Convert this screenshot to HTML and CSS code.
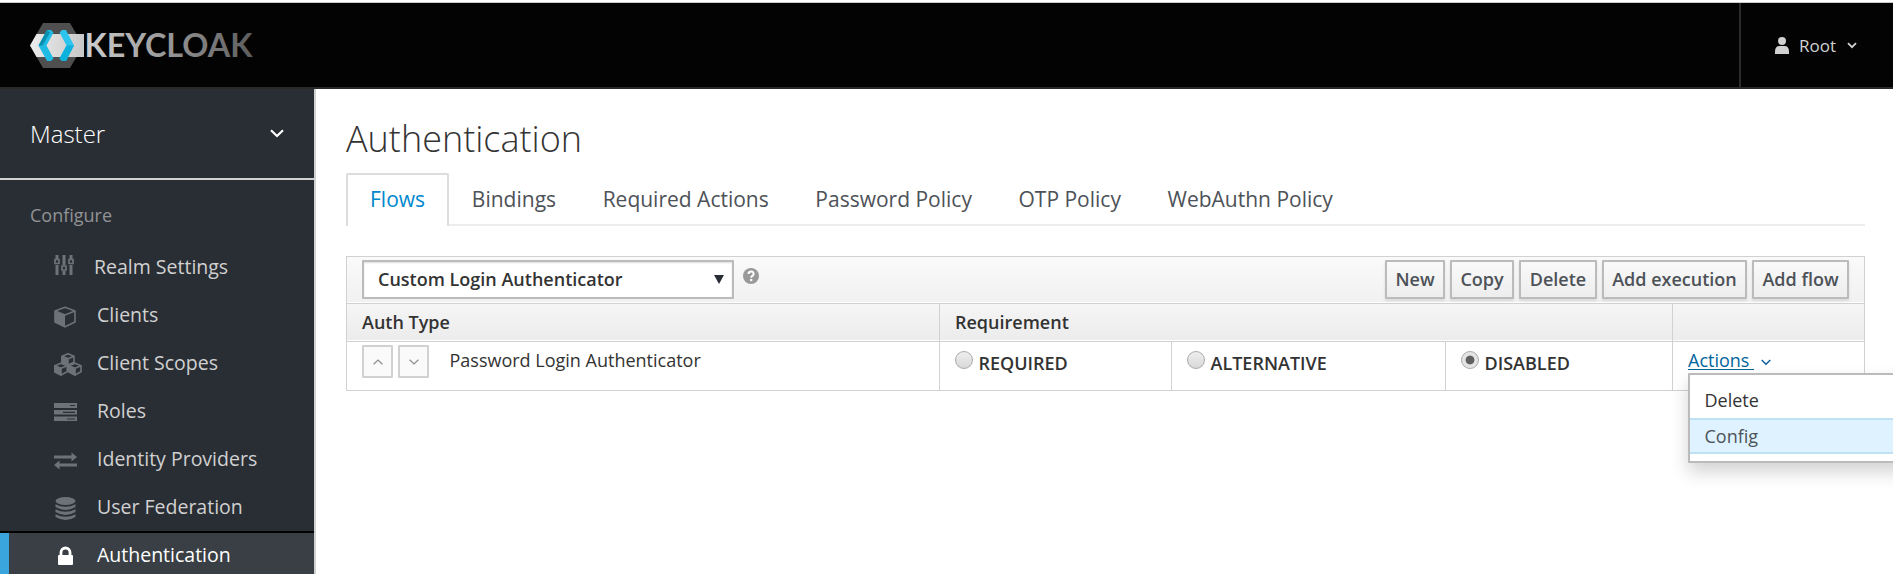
FILE: index.html
```html
<!DOCTYPE html>
<html lang="en">
<head>
<meta charset="utf-8">
<title>Keycloak Admin Console</title>
<link rel="stylesheet" href="styles.css">
</head>
<body>
<header class="topbar">
  <svg class="logo" width="226" height="46" viewBox="0 0 226 46" role="img">
    <defs>
      <linearGradient id="wordFade" x1="0" x2="1"><stop offset="0" stop-color="#d0d0d0"/><stop offset="1" stop-color="#5c5c5c"/></linearGradient>
      <linearGradient id="badgeFade" x1="0" x2="1"><stop offset="0" stop-color="#ececec"/><stop offset="1" stop-color="#c8c8c8"/></linearGradient>
    </defs>
    <path d="M13 0h27l13 22.500-13 22.500H13L0 22.500z" fill="#4f4f4f"/>
    <path d="M6.500 11H54v23H6.500L0 22.500z" fill="url(#badgeFade)"/>
    <path d="M17 7h4l2.500 2.500-7 13 7 13L21 38h-4L8.500 22.500z" fill="#1fbbe4"/>
    <path d="M17 7l3 2.500-7.500 13h-4z" fill="#088fae"/>
    <path d="M36 7h-4l-2.500 2.500 7 13-7 13L32 38h4l8-15.500z" fill="#2cc4ec"/>
    <path d="M44 22.500L36 38h-4l-2.500-2.500 7-13z" fill="#0cb2dc"/>
    <text class="wordmark" x="54.500" y="34" textLength="168" lengthAdjust="spacingAndGlyphs" fill="url(#wordFade)">KEYCLOAK</text>
  </svg>
  <div class="account">
    <svg width="14" height="17" viewBox="0 0 14 17"><circle cx="7" cy="4" r="4" fill="#d1d1d1"/><path d="M0 17v-2.500Q0 9 4.500 9h5Q14 9 14 14.500V17z" fill="#d1d1d1"/></svg>
    <span>Root</span>
    <svg class="caret" width="10" height="7" viewBox="0 0 10 7"><path d="M1 1.200l4 4 4-4" fill="none" stroke="#d1d1d1" stroke-width="1.800"/></svg>
  </div>
</header>
<div class="shell">
  <nav class="sidebar">
    <div class="realm"><span>Master</span><svg width="14" height="9" viewBox="0 0 14 9"><path d="M1 1.300l6 5.700 6-5.700" fill="none" stroke="#fff" stroke-width="2.200"/></svg></div>
    <h2 class="section">Configure</h2>
    <ul class="menu">
      <li class="item first"><svg width="28" height="24" viewBox="0 0 28 24"><g fill="none" stroke="#6d7279"><path stroke-width="3" d="M3 1v4M3 11v10M10 1v10M10 17v4M17 1v4M17 11v10"/><path stroke-width="1.700" d="M1 5.500h4v4H1zM8 12h4v4H8zM15 5.500h4v4h-4z"/></g></svg><span>Realm Settings</span></li>
      <li class="item"><svg width="28" height="24" viewBox="0 0 28 24"><path d="M11 3.300l10 3.700v11L11 22.700 1 18v-11z" fill="none" stroke="#6d7279" stroke-width="1.600" stroke-linejoin="round"/><path d="M1 7.500l10 3.500v12.500L1 18.500z" fill="#6d7279"/><path d="M1 7l10 4 10-4" fill="none" stroke="#6d7279" stroke-width="1.600"/></svg><span>Clients</span></li>
      <li class="item"><svg width="28" height="24" viewBox="0 0 28 24"><g fill="none" stroke="#6d7279" stroke-width="1.600" stroke-linejoin="round"><path d="M14 1.800l6 2.400v6L14 13l-6-2.800v-6zM8 4.200l6 2.600 6-2.600M7 11.300l6.200 2.500v6L7 23 .8 19.800v-6zM.8 13.800L7 16.300l6.200-2.500M21 11.300l6 2.500v6L21 23l-6.200-3.200v-6zM14.800 13.800l6.200 2.500 6-2.500"/><path fill="#6d7279" d="M8 4.600l6 2.400v5.800l-6-2.800zM.8 14.200L7 16.600V23L.8 19.800zM14.800 14.200l6.200 2.400V23l-6.200-3.200z"/></g></svg><span>Client Scopes</span></li>
      <li class="item"><svg width="28" height="24" viewBox="0 0 28 24"><path fill="#6d7279" fill-rule="evenodd" d="M0 3h23v5H0zM16 5v1h5V5zM0 10h23v4.500H0zM9 11.700v1.300h12v-1.300zM0 16.500h23v4.500H0zM13 18.500v1h8v-1z"/></svg><span>Roles</span></li>
      <li class="item low"><svg width="28" height="24" viewBox="0 0 28 24"><path fill="#6d7279" d="M0 6.500h17.500V3.500L23 8l-5.500 4.500v-3H0zM23 14.500H5.500V11.500L0 16l5.500 4.500v-3H23z"/></svg><span>Identity Providers</span></li>
      <li class="item low"><svg width="28" height="24" viewBox="0 0 28 24"><g fill="#6d7279"><ellipse cx="11.500" cy="4" rx="10" ry="4"/><path d="M1.500 7.300q10 5 20 0v2.600q-10 6-20 0zM1.500 12.300q10 5 20 0v2.600q-10 6-20 0zM1.500 17.300q10 5 20 0v2.600q-10 6-20 0z"/></g></svg><span>User Federation</span></li>
      <li class="item active"><svg width="28" height="24" viewBox="0 0 28 24"><rect x="4" y="11" width="15" height="10" rx="1" fill="#fff"/><path d="M7 11.500V8.500a4.500 4.500 0 019 0v3" fill="none" stroke="#fff" stroke-width="2.800"/></svg><span>Authentication</span></li>
    </ul>
  </nav>
  <main class="content">
    <h1 class="title">Authentication</h1>
    <ul class="tabs">
      <li class="tab current">Flows</li><li class="tab">Bindings</li><li class="tab">Required Actions</li><li class="tab">Password Policy</li><li class="tab">OTP Policy</li><li class="tab">WebAuthn Policy</li>
    </ul>
    <section class="table">
      <div class="toolbar">
        <div class="select"><span>Custom Login Authenticator</span><svg width="10" height="9" viewBox="0 0 10 9"><path d="M0 0h10L5 9z" fill="#292e34"/></svg></div>
        <svg class="help" width="16" height="16" viewBox="0 0 16 16"><circle cx="8" cy="8" r="8" fill="#999"/><path d="M5.500 6q0-2.500 2.600-2.500T10.600 6Q10.600 7 9.300 7.800 8.200 8.500 8.200 9.700" fill="none" stroke="#fff" stroke-width="2"/><path d="M7.100 11h2.200v2.200H7.100z" fill="#fff"/></svg>
        <div class="buttons">
          <button class="btn new">New</button><button class="btn copy">Copy</button><button class="btn delete">Delete</button><button class="btn execution">Add execution</button><button class="btn flow">Add flow</button>
        </div>
      </div>
      <div class="row head"><div class="cell">Auth Type</div><div class="cell wide">Requirement</div><div class="cell"></div></div>
      <div class="row">
        <div class="cell auth">
          <span class="move"><svg width="10" height="6" viewBox="0 0 10 6"><path d="M.6 5.300L5 1l4.400 4.300" fill="none" stroke="#8b8d8f" stroke-width="1.200"/></svg></span><span class="move"><svg width="10" height="6" viewBox="0 0 10 6"><path d="M.6.700L5 5 9.400.700" fill="none" stroke="#8b8d8f" stroke-width="1.200"/></svg></span>
          <span class="name">Password Login Authenticator</span>
        </div>
        <div class="cell option"><i class="radio"></i><span>REQUIRED</span></div>
        <div class="cell option"><i class="radio"></i><span>ALTERNATIVE</span></div>
        <div class="cell option"><i class="radio on"></i><span>DISABLED</span></div>
        <div class="cell actions"><span class="link">Actions&nbsp;</span><svg width="10" height="7" viewBox="0 0 10 7"><path d="M.7 1L5 5.300 9.300 1" fill="none" stroke="#0a5c9e" stroke-width="1.400"/></svg>
          <ul class="dropdown"><li class="choice">Delete</li><li class="choice hover">Config</li></ul>
        </div>
      </div>
    </section>
  </main>
</div>
</body>
</html>
```
FILE: styles.css
```css
* { box-sizing: border-box; }
html, body { height: 100%; }
body { margin: 0; overflow: hidden; background: #fff; color: #333; font: 18px/27px "Open Sans", "Noto Sans", sans-serif; }
ul { margin: 0; padding: 0; list-style: none; }
svg { display: block; flex: none; }
.topbar { height: 87px; margin-top: 2px; border-top: 1px solid #ccc; border-bottom: 2px solid #292929; background: #030303; display: flex; justify-content: space-between; padding-left: 30px; }
.logo { margin-top: 20px; }
.wordmark { font: 700 32px "Lato", sans-serif; }
.account { width: 154px; border-left: 2px solid #2b2b2b; padding-left: 34px; display: flex; align-items: center; color: #d1d1d1; font-size: 17px; }
.account span { margin: 0 11px 0 10px; }
.shell { display: flex; height: 485px; }
.sidebar { width: 316px; flex: none; background: #292e34; border-right: 2px solid #d1d1d1; overflow: hidden; }
.realm { height: 91px; border-bottom: 2px solid #d1d1d1; padding: 0 30px; display: flex; align-items: center; justify-content: space-between; color: #fff; font-size: 24px; font-weight: 300; }
.section { margin: 22px 0 0 30px; height: 26px; font-size: 18px; line-height: 27px; font-weight: 400; color: #929394; }
.menu { padding-top: 14px; }
.item { height: 48px; padding-left: 54px; display: flex; align-items: center; gap: 15px; color: #d1d1d1; font-size: 19.500px; white-space: nowrap; }
.item svg { margin-top: 4px; }
.item.first svg { margin-top: 0; }
.item.low svg { margin-top: 6px; }
.first { gap: 12px; }
.active { margin-top: 1px; height: 44px; border-top: 2px solid #030303; background: linear-gradient(90deg, #39a5dc 9px, #393f44 9px); color: #fff; }
.content { flex: 1; min-width: 0; padding: 29px 28px 0 30px; }
.title { margin: 0; font-size: 36px; line-height: 42px; height: 55px; font-weight: 300; color: #333; }
.tabs { display: flex; height: 53px; border-bottom: 2px solid #ededed; }
.tab { height: 53px; padding: 0 23.300px; line-height: 53px; font-size: 21px; color: #4d5258; white-space: nowrap; }
.current { border: 2px solid #ddd; border-bottom: 0; background: #fff; color: #0088ce; padding: 0 21.500px 0 22px; line-height: 49px; border-radius: 2px 2px 0 0; }
.table { margin-top: 30px; width: 1519px; border: 1px solid #d1d1d1; }
.toolbar { height: 46px; border-bottom: 1px solid #fff; background: linear-gradient(#fafafa, #f1f1f1); display: flex; padding: 3px 15px 0; }
.select { width: 372px; height: 39px; border: 2px solid #bbb; border-radius: 1px; background: #fff; box-shadow: inset 0 1px 2px #ddd; display: flex; align-items: center; justify-content: space-between; padding: 0 8px 0 14px; font-weight: 600; }
.help { margin: 8px 0 0 9px; }
.buttons { margin-left: auto; display: flex; gap: 5px; }
.btn { height: 39px; padding: 0 0 2px; border: 2px solid #bbb; border-radius: 1px; background: linear-gradient(#fafafa, #ededed); box-shadow: 0 2px 3px rgba(3, 3, 3, .1); color: #4d5258; font: 600 18px "Open Sans", sans-serif; }
.new { width: 60px; }
.copy { width: 64px; }
.delete { width: 78px; }
.execution { width: 145px; }
.flow { width: 97px; }
.row { display: grid; grid-template-columns: 592px 232px 274px 227px 192px; height: 49px; border-top: 1px solid #d1d1d1; }
.cell { padding-left: 15px; border-left: 1px solid #d1d1d1; white-space: nowrap; }
.cell:first-child { border-left: 0; }
.head { height: 38px; background: linear-gradient(#f5f5f5, #ececec); border-bottom: 1px solid #fff; font-weight: 600; line-height: 37px; }
.wide { grid-column: span 3; }
.auth { display: flex; padding-top: 3px; }
.move { width: 31px; height: 33px; margin-right: 5px; border: 2px solid #d1d1d1; border-radius: 1px; background: #fafafa; display: grid; place-items: center; }
.name { margin: 2px 0 0 15.500px; }
.option { display: flex; padding-top: 8px; font-weight: 600; gap: 5.500px; }
.radio { width: 18px; height: 18px; margin-top: 1px; border: 1px solid #aaa; border-radius: 50%; background: linear-gradient(#eee, #d9d9d9); }
.on { background: radial-gradient(circle, #606060 4px, #e4e4e4 4.800px); }
.actions { position: relative; display: flex; padding-top: 5px; }
.actions svg { margin: 12px 0 0 7px; }
.link { height: 23px; color: #00659c; border-bottom: 1px solid #00659c; }
.dropdown { position: absolute; left: 15px; top: 31px; width: 240px; height: 90px; border: 2px solid #bbb; border-radius: 1px; background: #fff; box-shadow: 0 9px 18px rgba(3, 3, 3, .175); padding-top: 7px; }
.choice { height: 36px; padding-left: 14.500px; line-height: 36px; }
.hover { background: #def3ff; border: solid #bee1f4; border-width: 2px 0; line-height: 32px; color: #4d5258; }
```
